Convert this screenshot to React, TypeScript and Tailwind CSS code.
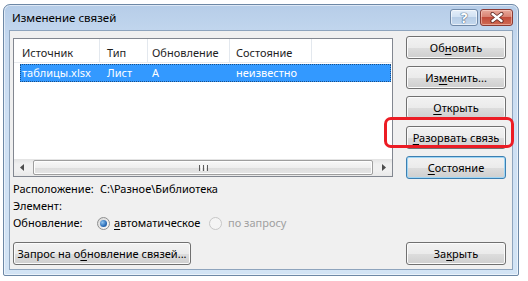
import React from "react";

function U({ children }: { children: React.ReactNode }) {
  return <span className="underline underline-offset-[2px] decoration-[1px]">{children}</span>;
}

function Btn({ children, def, className }: { children: React.ReactNode; def?: boolean; className?: string }) {
  return (
    <div
      className={
        (def
          ? "border-[#3c7fb1] shadow-[inset_0_0_0_1px_#9fd6f5] "
          : "border-[#707070] shadow-[inset_0_0_0_1px_#fbfbfb] ") +
        "h-[23px] shrink-0 whitespace-nowrap rounded-[3px] border bg-[linear-gradient(to_bottom,#f2f2f2_0%,#ebebeb_50%,#dddddd_51%,#cfcfcf_100%)] flex items-center justify-center leading-none " +
        (className ?? "")
      }
    >
      <span className="-mt-[1px]">{children}</span>
    </div>
  );
}

export default function App() {
  return (
    <div className="w-[528px] h-[281px] bg-white overflow-hidden font-['Segoe_UI','Noto_Sans',sans-serif] text-[11px] text-black whitespace-nowrap">
      <div className="ml-[3px] mt-[4px] w-[516px] h-[272px] rounded-t-[7px] rounded-b-[2px] border border-[#6d88a6] bg-[linear-gradient(to_bottom,#b6cde8_0%,#c4d8ef_12%,#cddff3_40%,#d3e4f5_100%)] shadow-[inset_0_0_0_1px_rgba(255,255,255,0.55)] flex flex-col">
        {/* title bar */}
        <div className="h-[25px] shrink-0 flex items-start">
          <div className="pl-[8px] pt-[5px] leading-[16px] text-[11.5px] text-black">Изменение связей</div>
          <div className="ml-auto mr-[5px] mt-[4px] flex gap-[2px]">
            <div className="w-[28px] h-[17px] rounded-[3px] border border-[#7089a8] bg-[linear-gradient(to_bottom,#e4eef9_0%,#d2e2f3_45%,#b7cde6_50%,#c4d8ee_100%)] shadow-[inset_0_0_0_1px_rgba(255,255,255,0.6)] flex items-center justify-center">
              <span className="text-[14px] font-bold leading-none text-white [text-shadow:0_0_1px_#4c6482,0_0_1px_#4c6482,0_0_1px_#4c6482]">?</span>
            </div>
            <div className="w-[33px] h-[17px] rounded-[3px] border border-[#8a3a33] bg-[linear-gradient(to_bottom,#e8a99b_0%,#d98373_45%,#c24c3b_50%,#cf6a52_100%)] shadow-[inset_0_0_0_1px_rgba(255,220,210,0.5)] flex items-center justify-center">
              <svg width="16" height="11" viewBox="0 0 16 11">
                <path d="M3.5 2 L12.5 9 M12.5 2 L3.5 9" stroke="#5a241e" strokeWidth="4" strokeLinecap="round" />
                <path d="M3.5 2 L12.5 9 M12.5 2 L3.5 9" stroke="#ffffff" strokeWidth="2.4" strokeLinecap="round" />
              </svg>
            </div>
          </div>
        </div>

        {/* client area */}
        <div className="mx-[5px] h-[240px] shrink-0 border border-[#8ea4bd] bg-[#f0f0f0] flex">
          {/* left column */}
          <div className="w-[383px] pl-[3px] pt-[7px] pb-[4px] flex flex-col">
            {/* list */}
            <div className="w-[380px] h-[139px] border border-[#828790] bg-white flex flex-col">
              {/* header */}
              <div className="h-[24px] flex items-center border-b border-[#e8ebef] text-[#1e1e1e]">
                <div className="w-[86px] h-full pl-[8px] pt-[5px] border-r border-[#e3e8ee] flex items-center">Источник</div>
                <div className="w-[48px] h-full pl-[7px] pt-[5px] border-r border-[#e3e8ee] flex items-center">Тип</div>
                <div className="w-[82px] h-full pl-[4px] pt-[5px] border-r border-[#e3e8ee] flex items-center">Обновление</div>
                <div className="w-[82px] h-full pl-[6px] pt-[5px] border-r border-[#e3e8ee] flex items-center">Состояние</div>
              </div>
              {/* row */}
              <div className="mt-[1px] ml-[6px] mr-[1px] h-[18px] bg-[#3399ff] border border-dotted border-[#1d4f86] flex items-center text-white">
                <div className="w-[80px] pl-[1px]">таблицы.xlsx</div>
                <div className="w-[46px] pl-[6px]">Лист</div>
                <div className="w-[84px] pl-[5px]">A</div>
                <div className="pl-[5px]">неизвестно</div>
              </div>
              <div className="flex-1" />
              {/* horizontal scrollbar */}
              <div className="h-[17px] bg-[linear-gradient(to_bottom,#e3e3e3,#f0f0f0_30%,#f0f0f0_70%,#e8e8e8)] flex items-center">
                <div className="w-[17px] h-full flex items-center justify-center">
                  <svg width="5" height="7" viewBox="0 0 5 7"><path d="M4 0 L0 3.5 L4 7 Z" fill="#4d4d4d" /></svg>
                </div>
                <div className="ml-[2px] w-[340px] h-[15px] rounded-[2px] border border-[#9e9e9e] bg-[linear-gradient(to_bottom,#f8f8f8_0%,#eeeeee_50%,#dcdcdc_51%,#e6e6e6_100%)] shadow-[inset_0_0_0_1px_#fdfdfd] flex items-center justify-center">
                  <div className="flex gap-[1px]">
                    <div className="w-[1px] h-[6px] bg-[#5c5c5c]" />
                    <div className="w-[1px] h-[6px] bg-[#fafafa]" />
                    <div className="w-[1px] h-[6px] bg-[#5c5c5c]" />
                    <div className="w-[1px] h-[6px] bg-[#fafafa]" />
                    <div className="w-[1px] h-[6px] bg-[#5c5c5c]" />
                  </div>
                </div>
                <div className="ml-[2px] w-[17px] h-full flex items-center justify-center">
                  <svg width="5" height="7" viewBox="0 0 5 7"><path d="M1 0 L5 3.5 L1 7 Z" fill="#4d4d4d" /></svg>
                </div>
              </div>
            </div>

            {/* info rows */}
            <div className="mt-[4px] flex flex-col">
              <div className="h-[17px] flex items-center">
                <div className="w-[84px]">Расположение:</div>
                <div className="pl-[3px]">C:\Разное\Библиотека</div>
              </div>
              <div className="h-[17px] flex items-center">
                <div className="w-[84px]">Элемент:</div>
              </div>
              <div className="h-[17px] flex items-center">
                <div className="w-[84px]">Обновление:</div>
                <div className="w-[112px] flex items-center">
                  <div className="w-[13px] h-[13px] rounded-full border border-[#8e8f8f] bg-[linear-gradient(135deg,#d6d6d6,#fcfcfc)] flex items-center justify-center">
                    <div className="w-[7px] h-[7px] rounded-full bg-[radial-gradient(circle_at_35%_35%,#8fc4f0,#2a6db8_60%,#1b4e8c)]" />
                  </div>
                  <div className="ml-[4px]"><U>а</U>втоматическое</div>
                </div>
                <div className="flex items-center text-[#a0a0a0]">
                  <div className="w-[13px] h-[13px] rounded-full border border-[#c7c7c7] bg-[#f4f4f4]" />
                  <div className="ml-[6px]">по запросу</div>
                </div>
              </div>
            </div>

            <Btn className="mt-auto w-[178px]">
              Запрос на о<U>б</U>новление связей...
            </Btn>
          </div>

          {/* right column */}
          <div className="ml-[13px] w-[100px] pt-[5px] pb-[4px] flex flex-col gap-[7px] relative">
            <Btn>
              Об<U>н</U>овить
            </Btn>
            <Btn>
              Из<U>м</U>енить...
            </Btn>
            <Btn>
              <U>О</U>ткрыть
            </Btn>
            <Btn>
              <U>Р</U>азорвать связь
            </Btn>
            <Btn def>
              <U>С</U>остояние
            </Btn>
            <Btn className="mt-auto">
              За<U>к</U>рыть
            </Btn>
            {/* red highlight */}
            <div className="absolute left-[-22px] top-[86px] w-[130px] h-[31px] rounded-[7px] border-[3px] border-[#ec1c24]" />
          </div>
        </div>
      </div>
    </div>
  );
}
